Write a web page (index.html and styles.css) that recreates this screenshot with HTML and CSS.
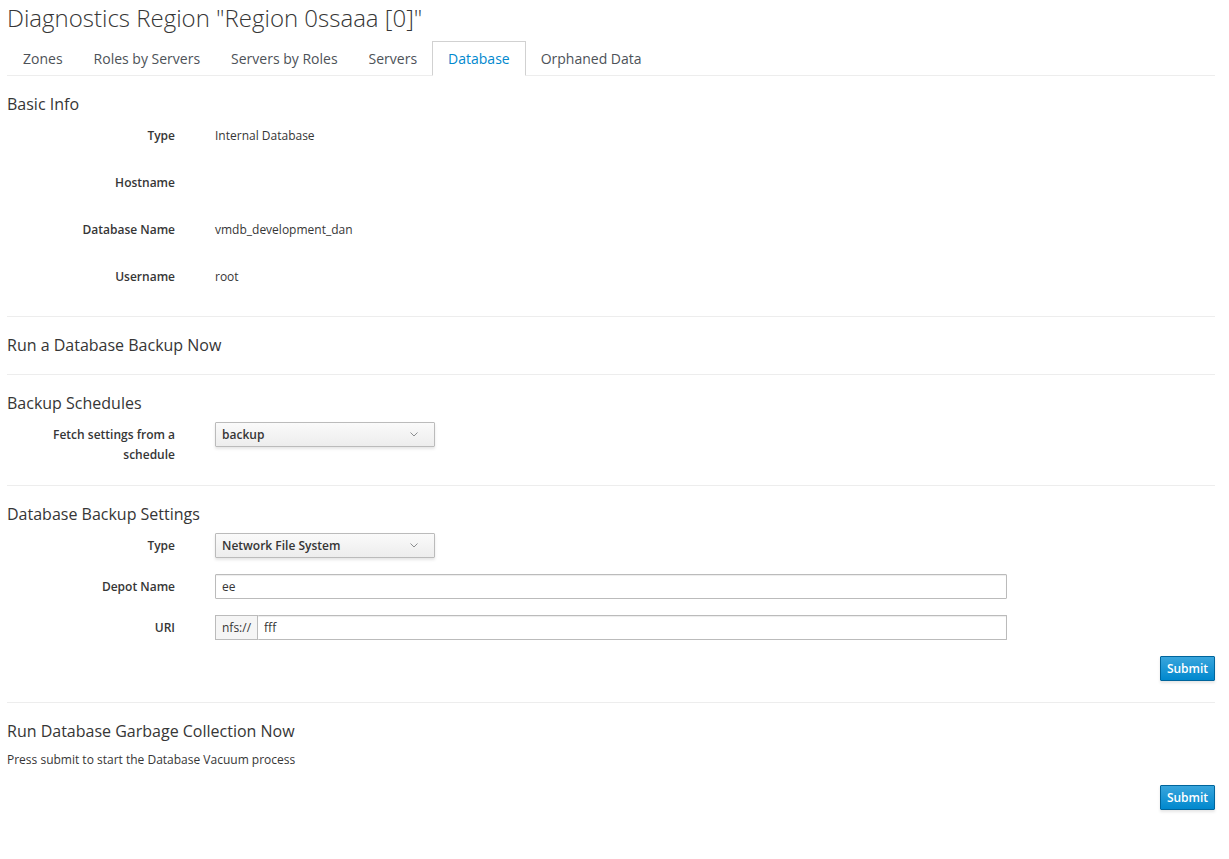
FILE: index.html
```html
<!DOCTYPE html>
<html lang="en">
<head>
  <meta charset="UTF-8">
  <title>Diagnostics Region</title>
  <link rel="stylesheet" href="styles.css">
</head>
<body>

  <div class="page">
    <h1 class="page-title">Diagnostics Region "Region 0ssaaa [0]"</h1>

    <ul class="tabs">
      <li><a href="#">Zones</a></li>
      <li><a href="#">Roles by Servers</a></li>
      <li><a href="#">Servers by Roles</a></li>
      <li><a href="#">Servers</a></li>
      <li class="active"><a href="#">Database</a></li>
      <li><a href="#">Orphaned Data</a></li>
    </ul>

    <div class="section">
      <h3>Basic Info</h3>
      <div class="info-list">
        <div class="info-row">
          <span class="label">Type</span>
          <span class="value">Internal Database</span>
        </div>
        <div class="info-row">
          <span class="label">Hostname</span>
          <span class="value"></span>
        </div>
        <div class="info-row">
          <span class="label">Database Name</span>
          <span class="value">vmdb_development_dan</span>
        </div>
        <div class="info-row">
          <span class="label">Username</span>
          <span class="value">root</span>
        </div>
      </div>
    </div>

    <div class="section">
      <h3>Run a Database Backup Now</h3>
    </div>

    <div class="section">
      <h3>Backup Schedules</h3>
      <div class="form">
        <div class="form-row">
          <label class="label">Fetch settings from a schedule</label>
          <div class="select">
            <span>backup</span>
            <svg width="8" height="5" viewBox="0 0 8 5"><path d="M0.5 0.5 L4 4 L7.5 0.5" fill="none" stroke="#8b8d8f" stroke-width="1"/></svg>
          </div>
        </div>
      </div>
    </div>

    <div class="section">
      <h3>Database Backup Settings</h3>
      <div class="form">
        <div class="form-row">
          <label class="label">Type</label>
          <div class="select">
            <span>Network File System</span>
            <svg width="8" height="5" viewBox="0 0 8 5"><path d="M0.5 0.5 L4 4 L7.5 0.5" fill="none" stroke="#8b8d8f" stroke-width="1"/></svg>
          </div>
        </div>
        <div class="form-row">
          <label class="label" for="depot">Depot Name</label>
          <input class="input" id="depot" type="text" value="ee">
        </div>
        <div class="form-row">
          <label class="label" for="uri">URI</label>
          <div class="input-group">
            <span class="addon">nfs://</span>
            <input class="input" id="uri" type="text" value="fff">
          </div>
        </div>
      </div>
      <div class="actions">
        <button type="button" class="btn-primary">Submit</button>
      </div>
    </div>

    <div class="section last">
      <h3>Run Database Garbage Collection Now</h3>
      <p class="note">Press submit to start the Database Vacuum process</p>
      <div class="actions">
        <button type="button" class="btn-primary">Submit</button>
      </div>
    </div>
  </div>

</body>
</html>
```

FILE: styles.css
```css
body {
  font-family: "Open Sans", "Liberation Sans", sans-serif;
  font-size: 12px;
  color: #363636;
  background-color: #fff;
  margin: 0;
  padding: 0;
}

.page {
  padding: 0 14px 0 7px;
}

.page-title {
  font-size: 24px;
  font-weight: 300;
  line-height: 26px;
  margin: 0;
  padding-top: 5px;
  height: 36px;
}

/* tabs */
.tabs {
  list-style: none;
  margin: 0;
  padding: 0;
  display: flex;
  border-bottom: 1px solid #ededed;
  height: 34px;
}

.tabs li {
  margin-right: -1px;
}

.tabs a {
  display: block;
  height: 34px;
  box-sizing: border-box;
  padding: 1px 15px 0;
  line-height: 32px;
  font-size: 14px;
  color: #4d5258;
  text-decoration: none;
  border: 1px solid transparent;
}

.tabs li.active a {
  color: #0088ce;
  border-color: #d1d1d1 #d1d1d1 #fff;
  background: #fff;
  height: 35px;
}

/* sections */
.section {
  padding: 19px 0 20px;
  border-top: 1px solid #ededed;
}

.tabs + .section {
  border-top: 0;
  padding-bottom: 28px;
}

.section h3 {
  font-size: 16px;
  font-weight: 400;
  line-height: 18px;
  margin: 0;
}

.label {
  width: 168px;
  flex-shrink: 0;
  text-align: right;
  font-weight: 600;
  margin-right: 40px;
}

/* basic info */
.info-list {
  display: flex;
  flex-direction: column;
  gap: 23px;
  margin-top: 10px;
}

.info-row {
  display: flex;
  align-items: center;
  height: 24px;
}

/* forms */
.form {
  display: flex;
  flex-direction: column;
  gap: 16px;
  margin-top: 10px;
}

.form-row {
  display: flex;
  align-items: flex-start;
}

.form-row .label {
  line-height: 20px;
  padding-top: 3px;
}

.select {
  width: 220px;
  height: 25px;
  box-sizing: border-box;
  border: 1px solid #bbb;
  border-radius: 1px;
  background: linear-gradient(to bottom, #fafafa 0%, #ededed 100%);
  box-shadow: 0 2px 3px rgba(3, 3, 3, 0.1);
  display: flex;
  align-items: center;
  justify-content: space-between;
  padding: 0 16px 0 6px;
  font-weight: 600;
  color: #363636;
}

.input {
  width: 792px;
  height: 25px;
  box-sizing: border-box;
  border: 1px solid #bbb;
  border-radius: 1px;
  box-shadow: inset 0 1px 1px rgba(3, 3, 3, 0.075);
  padding: 2px 6px;
  font-family: inherit;
  font-size: 12px;
  color: #363636;
  margin: 0;
}

.input-group {
  display: flex;
  width: 792px;
}

.input-group .input {
  width: auto;
  flex: 1;
  border-left: 0;
}

.addon {
  height: 25px;
  box-sizing: border-box;
  border: 1px solid #bbb;
  background-color: #f5f5f5;
  padding: 0 6px;
  line-height: 23px;
  color: #363636;
}

.actions {
  display: flex;
  justify-content: flex-end;
  margin-top: 16px;
}

.btn-primary {
  height: 25px;
  width: 55px;
  padding: 0;
  font-family: inherit;
  font-size: 12px;
  font-weight: 600;
  color: #fff;
  background: linear-gradient(to bottom, #39a5dc 0%, #0088ce 100%);
  border: 1px solid #00659c;
  border-radius: 1px;
  box-shadow: 0 2px 3px rgba(3, 3, 3, 0.1);
  cursor: pointer;
}

.section:nth-last-of-type(2) {
  padding-bottom: 21px;
}

.note {
  margin: 10px 0 0;
  line-height: 20px;
}

.last .actions {
  margin-top: 15px;
}
```
